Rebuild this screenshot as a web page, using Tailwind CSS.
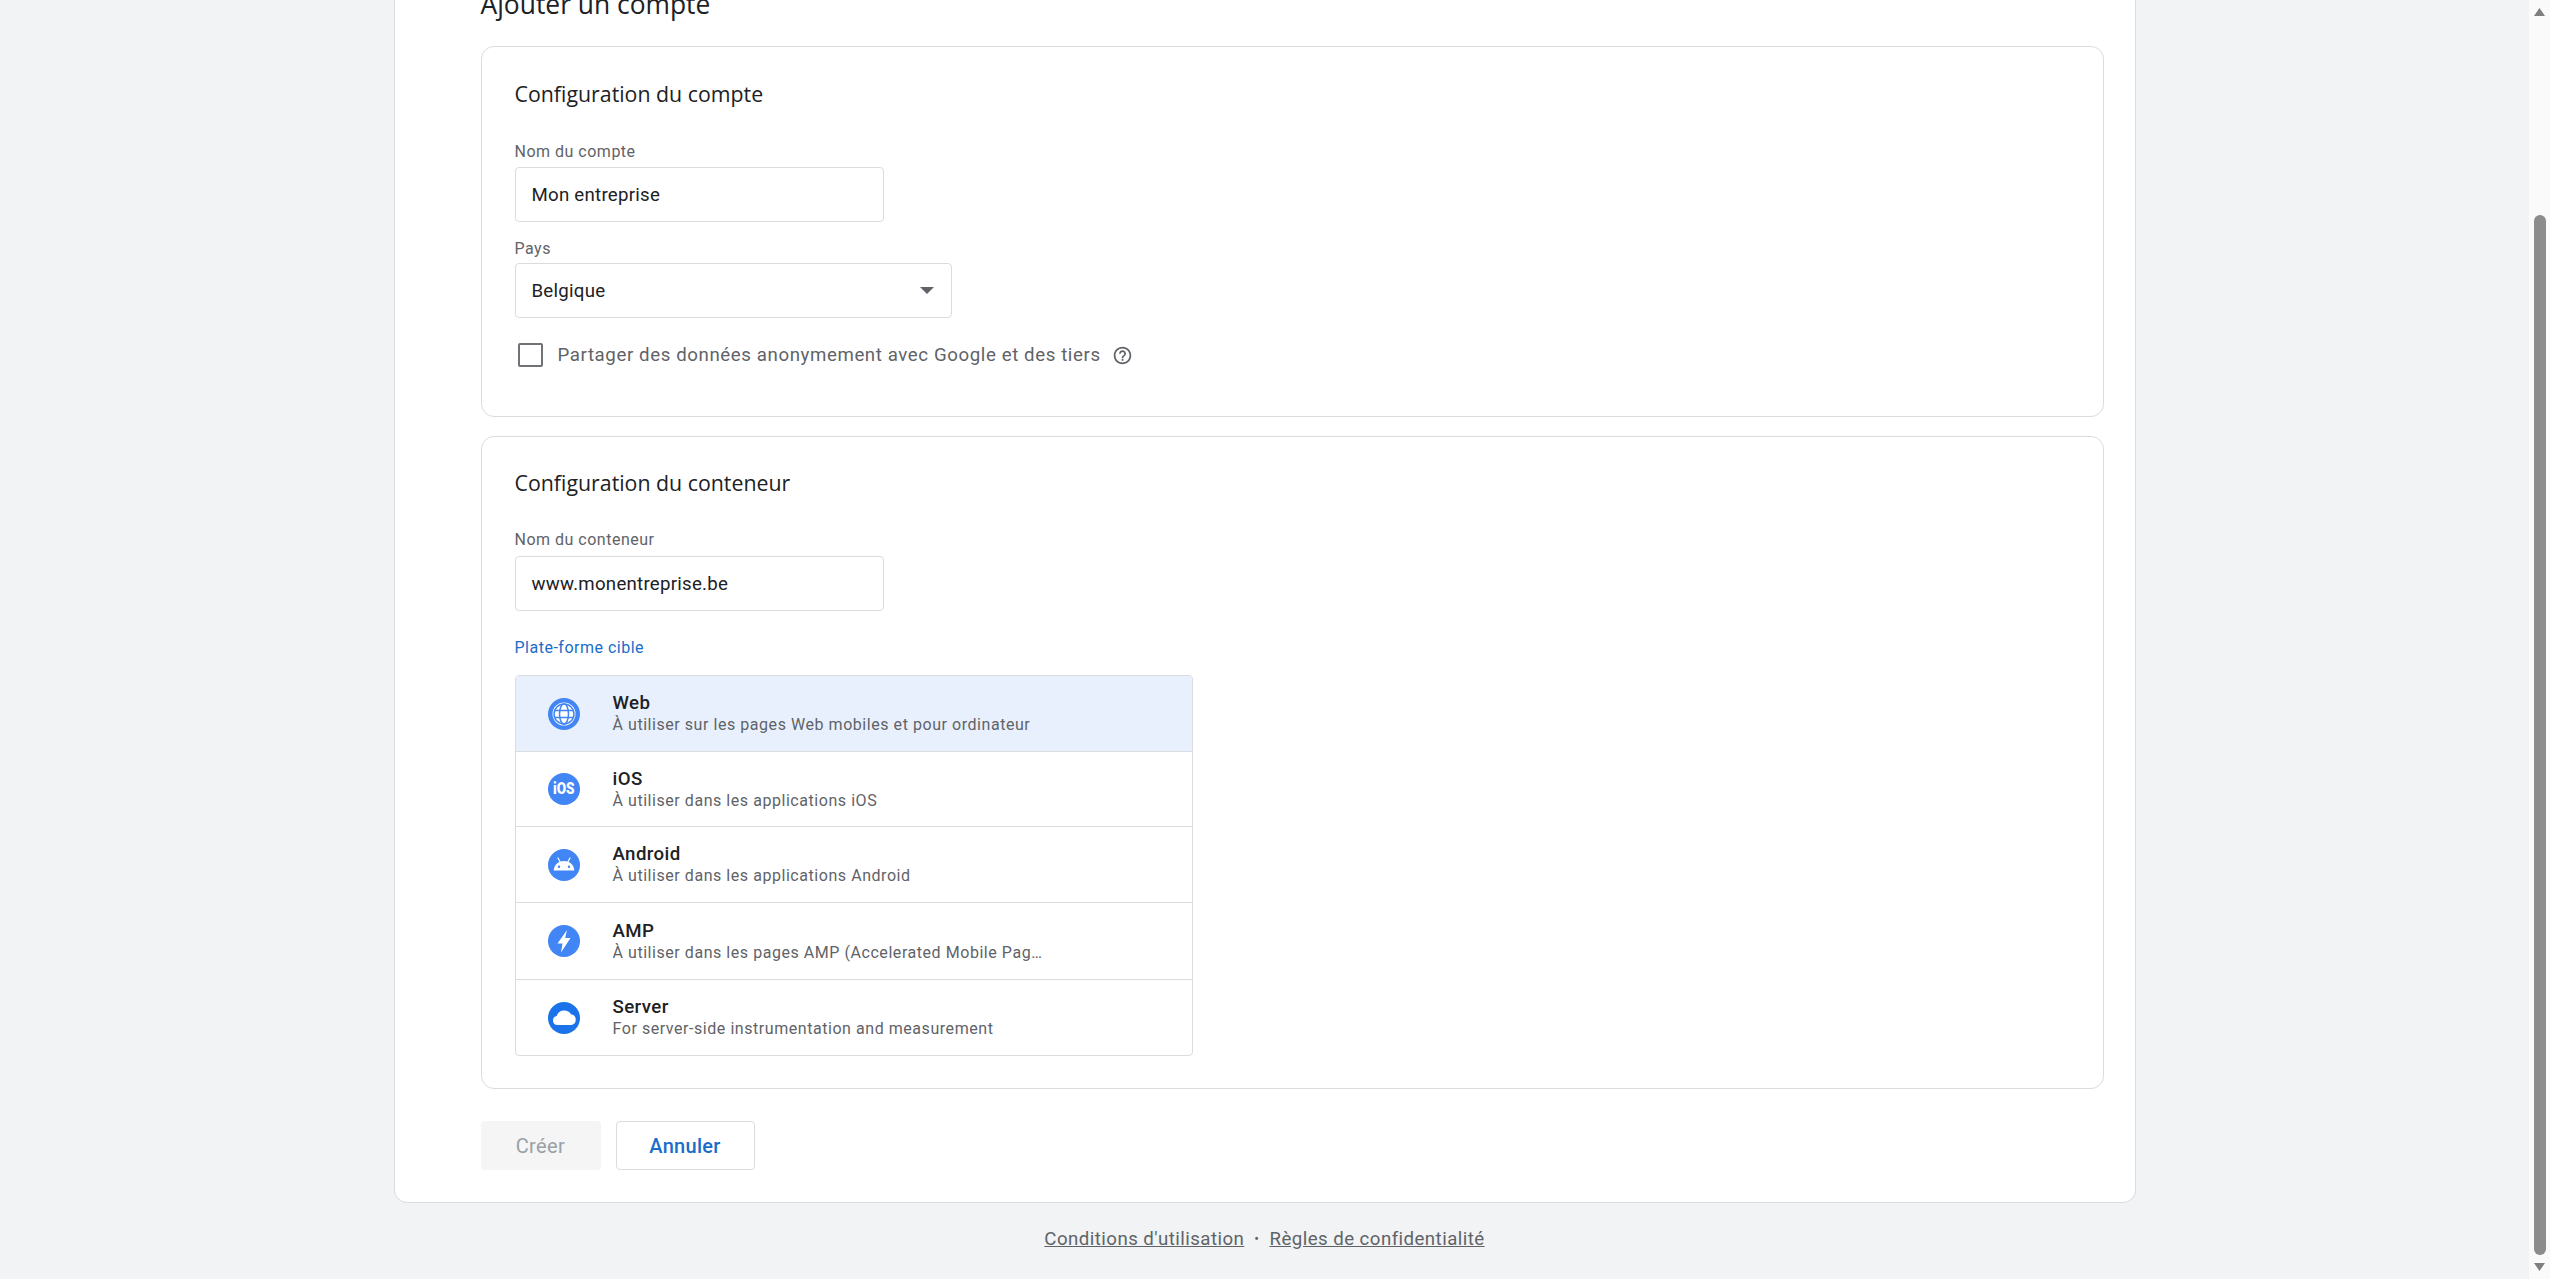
<!DOCTYPE html>
<html lang="fr">
<head>
  <meta charset="UTF-8">
  <title>Ajouter un compte</title>
  <script src="https://cdn.jsdelivr.net/npm/@tailwindcss/browser@4"></script>
</head>
<body class="bg-[#f1f3f4] h-screen overflow-hidden flex font-['Roboto',sans-serif] text-[#202124]">

  <main class="flex-1 min-w-0 flex flex-col items-center">
    <div class="w-[1742px] h-[1204px] shrink-0 -mt-[1px] bg-white border border-[#dadce0] rounded-b-[13px] pl-[86px] pr-[31px]">
      <h1 class="text-[26.4px] leading-[32px] -mt-[12px] h-[32px] font-['Open_Sans',sans-serif]">Ajouter un compte</h1>

      <section class="mt-[26px] h-[371px] border border-[#dadce0] rounded-[13px] px-[33px] pt-[31px]">
        <h2 class="text-[21.33px] leading-[32px] font-['Open_Sans',sans-serif]">Configuration du compte</h2>
        <label class="block mt-[32px] text-[16px] leading-[20px] tracking-[0.5px] text-[#5f6368]">Nom du compte</label>
        <div class="mt-[5px] w-[369px] h-[55px] border border-[#dadce0] rounded-[4px] px-[16px] flex items-center text-[18.67px] tracking-[0.25px]">Mon entreprise</div>
        <label class="block mt-[17px] text-[16px] leading-[20px] tracking-[0.5px] text-[#5f6368]">Pays</label>
        <div class="mt-[4px] w-[437px] h-[55px] border border-[#dadce0] rounded-[4px] pl-[16px] pr-[17px] flex items-center justify-between text-[18.67px] tracking-[0.25px]">
          <span>Belgique</span>
          <svg class="w-[14px] h-[7px]" viewBox="0 0 14 7"><path d="M0 0h14L7 7z" fill="#5f6368"/></svg>
        </div>
        <div class="mt-[24px] flex items-center h-[26px]">
          <span class="ml-[3px] w-[25px] h-[24px] border-[2px] border-[#6f7377] rounded-[2px]"></span>
          <span class="ml-[15px] text-[18.67px] tracking-[0.6px] text-[#5f6368]">Partager des données anonymement avec Google et des tiers</span>
          <svg class="ml-[11px] w-[21px] h-[21px]" viewBox="0 0 24 24" fill="#5f6368"><path d="M11 18h2v-2h-2v2zm1-16C6.48 2 2 6.48 2 12s4.48 10 10 10 10-4.48 10-10S17.52 2 12 2zm0 18c-4.41 0-8-3.59-8-8s3.59-8 8-8 8 3.59 8 8-3.59 8-8 8zm0-14c-2.21 0-4 1.79-4 4h2c0-1.1.9-2 2-2s2 .9 2 2c0 2-3 1.75-3 5h2c0-2.25 3-2.5 3-5 0-2.21-1.79-4-4-4z"/></svg>
        </div>
      </section>

      <section class="mt-[19px] h-[653px] border border-[#dadce0] rounded-[13px] px-[33px] pt-[30px]">
        <h2 class="text-[21.33px] leading-[32px] font-['Open_Sans',sans-serif]">Configuration du conteneur</h2>
        <label class="block mt-[31px] text-[16px] leading-[20px] tracking-[0.5px] text-[#5f6368]">Nom du conteneur</label>
        <div class="mt-[6px] w-[369px] h-[55px] border border-[#dadce0] rounded-[4px] px-[16px] flex items-center text-[18.67px] tracking-[0.25px]">www.monentreprise.be</div>
        <div class="mt-[27px] text-[16px] leading-[20px] tracking-[0.5px] text-[#1a6dc8]">Plate-forme cible</div>

        <div class="mt-[17px] w-[678px] border border-[#dadce0] rounded-[4px] overflow-hidden">
          <div class="h-[76px] bg-[#e8f0fe] border-b border-[#dadce0] flex items-center">
            <svg class="ml-[32px] w-[32px] h-[32px]" viewBox="0 0 32 32">
              <circle cx="16" cy="16" r="16" fill="#4285f4"/>
              <circle cx="16" cy="16" r="11.500" fill="#fff"/>
              <g fill="none" stroke="#4285f4" stroke-width="1.500">
                <circle cx="16" cy="16" r="10"/>
                <ellipse cx="16" cy="16" rx="4.500" ry="10"/>
                <path d="M6 12.500h20M6 19.500h20"/>
              </g>
            </svg>
            <div class="ml-[33px] min-w-0">
              <div class="text-[18.67px] leading-[23px] tracking-[0.4px] font-medium">Web</div>
              <div class="text-[16px] leading-[20px] tracking-[0.55px] text-[#5f6368]">À utiliser sur les pages Web mobiles et pour ordinateur</div>
            </div>
          </div>
          <div class="h-[75px] border-b border-[#dadce0] flex items-center">
            <div class="ml-[32px] w-[32px] h-[32px] shrink-0 rounded-full bg-[#4285f4] flex items-center justify-center text-white text-[16px] leading-none font-black"><span class="scale-x-[.85]">iOS</span></div>
            <div class="ml-[33px] min-w-0">
              <div class="text-[18.67px] leading-[23px] tracking-[0.4px] font-medium">iOS</div>
              <div class="text-[16px] leading-[20px] tracking-[0.55px] text-[#5f6368]">À utiliser dans les applications iOS</div>
            </div>
          </div>
          <div class="h-[76px] border-b border-[#dadce0] flex items-center">
            <svg class="ml-[32px] w-[32px] h-[32px]" viewBox="0 0 32 32">
              <circle cx="16" cy="16" r="16" fill="#4285f4"/>
              <path d="M5.700 21.500c.3-5.500 4.500-9.500 10.300-9.500s10 4 10.300 9.500z" fill="#fff"/>
              <path d="M10 9l2.500 4.500M22 9l-2.500 4.500" stroke="#fff" stroke-width="1.200" stroke-linecap="round"/>
              <circle cx="11" cy="17.800" r="1.200" fill="#4285f4"/>
              <circle cx="21" cy="17.800" r="1.200" fill="#4285f4"/>
            </svg>
            <div class="ml-[33px] min-w-0">
              <div class="text-[18.67px] leading-[23px] tracking-[0.4px] font-medium">Android</div>
              <div class="text-[16px] leading-[20px] tracking-[0.55px] text-[#5f6368]">À utiliser dans les applications Android</div>
            </div>
          </div>
          <div class="h-[77px] border-b border-[#dadce0] flex items-center">
            <svg class="ml-[32px] w-[32px] h-[32px]" viewBox="0 0 32 32">
              <circle cx="16" cy="16" r="16" fill="#4285f4"/>
              <path d="M19 5 9.500 18.500h5L13 27.500l9.500-14.500h-5.300z" fill="#fff"/>
            </svg>
            <div class="ml-[33px] min-w-0">
              <div class="text-[18.67px] leading-[23px] tracking-[0.4px] font-medium">AMP</div>
              <div class="w-[431px] truncate text-[16px] leading-[20px] tracking-[0.55px] text-[#5f6368]">À utiliser dans les pages AMP (Accelerated Mobile Pages)</div>
            </div>
          </div>
          <div class="h-[75px] flex items-center">
            <svg class="ml-[32px] w-[32px] h-[32px]" viewBox="0 0 32 32">
              <circle cx="16" cy="16" r="16" fill="#1a73e8"/>
              <path d="M9.500 23a4.500 4.500 0 0 1-.9-8.900A8 8 0 0 1 23 12.200a5.500 5.500 0 0 1 .5 10.800z" fill="#fff"/>
            </svg>
            <div class="ml-[33px] min-w-0">
              <div class="text-[18.67px] leading-[23px] tracking-[0.4px] font-medium">Server</div>
              <div class="text-[16px] leading-[20px] tracking-[0.55px] text-[#5f6368]">For server-side instrumentation and measurement</div>
            </div>
          </div>
        </div>
      </section>

      <div class="mt-[32px] flex gap-[15px]">
        <button class="w-[120px] h-[49px] rounded-[4px] bg-[#f5f5f5] text-[20px] leading-[46px] tracking-[0.4px] text-[#9aa0a6]">Créer</button>
        <button class="w-[139px] h-[49px] rounded-[4px] border border-[#dadce0] bg-white text-[20px] leading-[44px] tracking-[0.3px] font-medium text-[#1a6dc8]">Annuler</button>
      </div>
    </div>

    <footer class="mt-[24px] flex items-center text-[18.67px] leading-[24px] tracking-[0.45px] text-[#5f6368]">
      <a class="underline">Conditions d'utilisation</a>
      <span class="mx-[10px] text-[14px]">•</span>
      <a class="underline">Règles de confidentialité</a>
    </footer>
  </main>

  <aside class="w-[21px] shrink-0 bg-[#fafafa] flex flex-col items-center">
    <svg class="mt-[8px] w-[11px] h-[8px]" viewBox="0 0 11 8"><path d="M5.500 0 11 8H0z" fill="#7f7f7f"/></svg>
    <div class="mt-[199px] w-[12px] h-[1040px] rounded-full bg-[#8c8c8c]"></div>
    <svg class="mt-[8px] w-[11px] h-[8px]" viewBox="0 0 11 8"><path d="M0 0h11L5.500 8z" fill="#7f7f7f"/></svg>
  </aside>

</body>
</html>
